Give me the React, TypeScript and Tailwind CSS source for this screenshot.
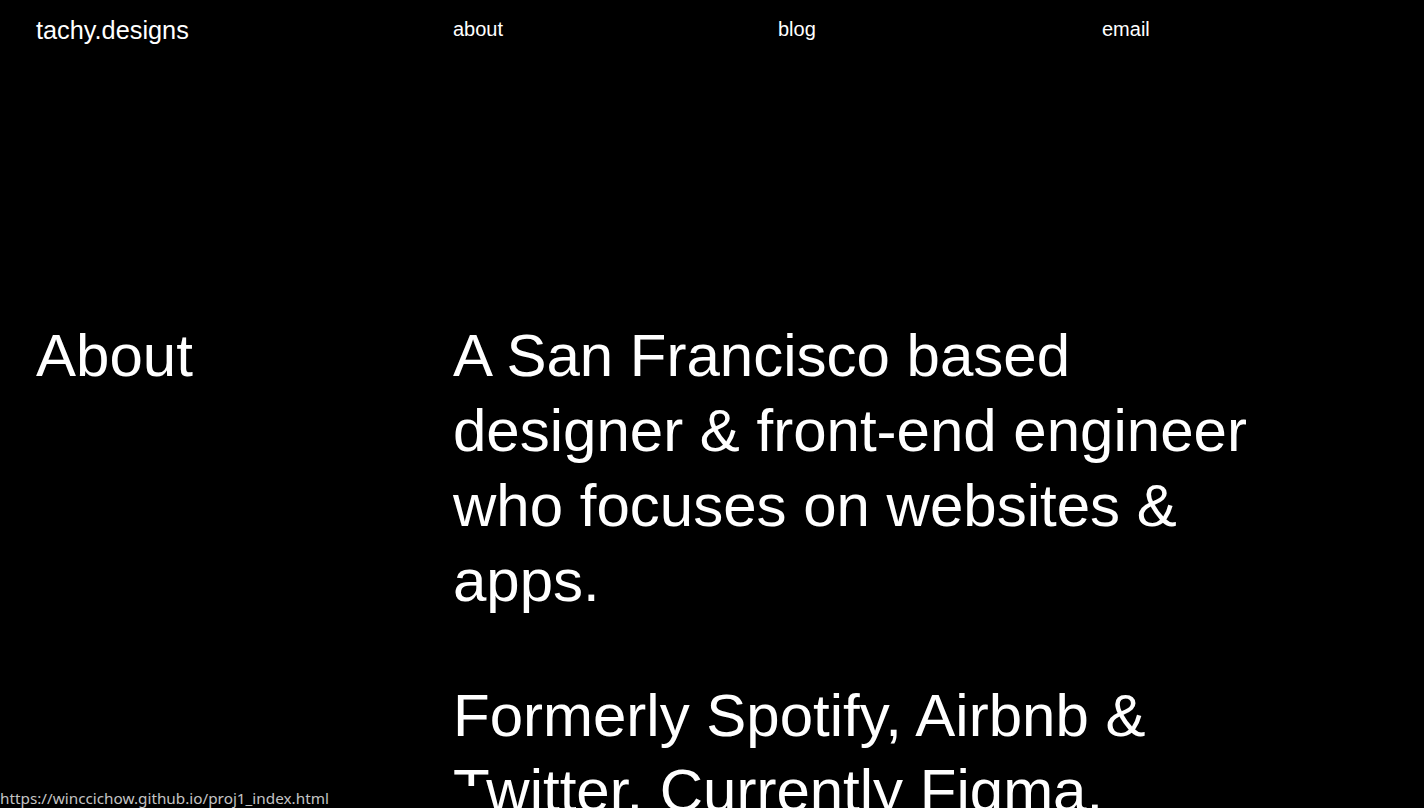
import React from 'react';

const App: React.FC = () => {
  return (
    <div className="min-h-screen bg-black text-white font-['Liberation_Sans',Arial,sans-serif] overflow-hidden">
      <header className="grid grid-cols-[417px_325px_324px_1fr] px-9 pt-[14px]">
        <a href="#" className="text-[25.3px] leading-[29px] mt-[2px]">tachy.designs</a>
        <a href="#" className="text-[20px] leading-[23px] mt-[4px]">about</a>
        <a href="#" className="text-[20px] leading-[23px] mt-[4px]">blog</a>
        <a href="#" className="text-[20px] leading-[23px] mt-[4px]">email</a>
      </header>

      <main className="grid grid-cols-[417px_1fr] px-9 mt-[273px]">
        <h1 className="text-[60px] leading-[75px]">About</h1>
        <div className="max-w-[830px] text-[60px] leading-[75px] space-y-[60px]">
          <p>A San Francisco based designer &amp; front-end engineer who focuses on websites &amp; apps.</p>
          <p>Formerly Spotify, Airbnb &amp; Twitter. Currently Figma.</p>
        </div>
      </main>

      <div className="fixed bottom-0 left-0 w-[488px] h-[22px] bg-black text-[15.3px] leading-[22px] pt-[1px] text-[#c4c4c4] font-['Noto_Sans',sans-serif]">
        https://winccichow.github.io/proj1_index.html
      </div>
    </div>
  );
};

export default App;
